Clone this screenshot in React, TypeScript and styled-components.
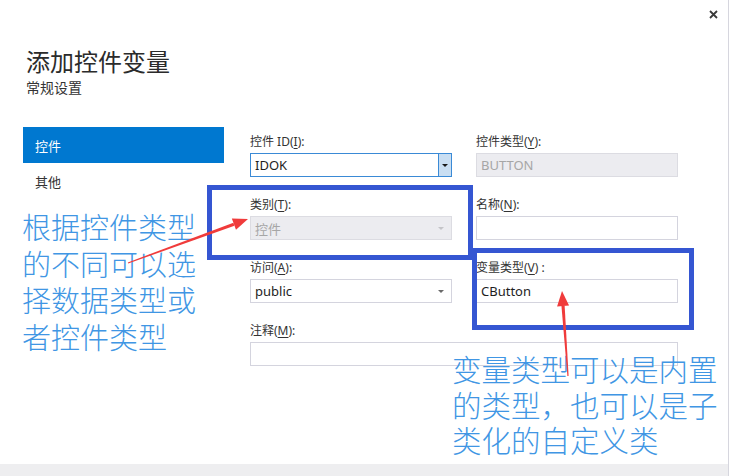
import React from "react";
import styled, { createGlobalStyle } from "styled-components";

const GlobalStyle = createGlobalStyle`
  html, body {
    margin: 0;
    padding: 0;
    background: #ffffff;
  }
  #root {
    width: 732px;
    height: 476px;
    overflow: hidden;
  }
`;

const Window = styled.div`
  position: relative;
  width: 728px;
  height: 476px;
  border-right: 1px solid #d6d6de;
  background: #ffffff;
  display: flex;
  flex-direction: column;
  font-family: "Noto Sans", "Noto Sans CJK SC", sans-serif;
  color: #333333;
`;

const CloseRow = styled.div`
  height: 28px;
  display: flex;
  justify-content: flex-end;
  align-items: center;
  padding-right: 10px;
`;

const CloseButton = styled.div`
  width: 10px;
  height: 10px;
  display: flex;
  align-items: center;
  justify-content: center;
`;

const Title = styled.h1`
  margin: 20px 0 0 26px;
  font-size: 24px;
  line-height: 28px;
  font-weight: 400;
  color: #2b2b2b;
`;

const Subtitle = styled.div`
  margin: 3px 0 0 26px;
  font-size: 14px;
  line-height: 18px;
  color: #333333;
`;

const Body = styled.div`
  flex: 1;
  display: flex;
  margin-top: 30px;
  padding-left: 23px;
`;

const Sidebar = styled.nav`
  width: 201px;
  display: flex;
  flex-direction: column;
`;

const NavItem = styled.div<{ $active?: boolean }>`
  height: 36px;
  display: flex;
  align-items: center;
  padding-left: 12px;
  font-size: 13px;
  background: ${(p) => (p.$active ? "#0078d0" : "transparent")};
  color: ${(p) => (p.$active ? "#ffffff" : "#333333")};
`;

const Form = styled.div`
  margin-left: 26px;
  padding-top: 7px;
  display: grid;
  grid-template-columns: 202px 202px;
  column-gap: 24px;
  row-gap: 20px;
  align-content: start;
`;

const Field = styled.div<{ $wide?: boolean }>`
  display: flex;
  flex-direction: column;
  grid-column: ${(p) => (p.$wide ? "1 / span 2" : "auto")};
`;

const Label = styled.label`
  font-size: 12px;
  line-height: 16px;
  margin-bottom: 3px;
  color: #333333;
  white-space: pre;

  u {
    text-decoration-thickness: 1px;
    text-underline-offset: 2px;
  }
`;

const Box = styled.div<{ $disabled?: boolean; $focus?: boolean }>`
  height: 24px;
  box-sizing: border-box;
  border: 1px solid ${(p) => (p.$focus ? "#3a8ad6" : p.$disabled ? "#dcdce2" : "#d4d4de")};
  background: ${(p) => (p.$disabled ? "#ececf0" : "#ffffff")};
  color: ${(p) => (p.$disabled ? "#a6a6a6" : "#1e1e1e")};
  display: flex;
  align-items: center;
  font-size: 13px;
  padding-left: 4px;
  padding-right: ${(p) => (p.$focus ? "0" : "0")};
`;

const BoxText = styled.span`
  flex: 1;
`;

const DropButton = styled.div<{ $boxed?: boolean }>`
  width: ${(p) => (p.$boxed ? "12px" : "16px")};
  align-self: stretch;
  display: flex;
  align-items: center;
  justify-content: center;
  background: ${(p) => (p.$boxed ? "#c9def2" : "transparent")};
  border-left: ${(p) => (p.$boxed ? "1px solid #3a8ad6" : "none")};
  margin-right: ${(p) => (p.$boxed ? "0" : "2px")};
`;

const Caret = styled.div<{ $color: string }>`
  width: 0;
  height: 0;
  border-left: 3px solid transparent;
  border-right: 3px solid transparent;
  border-top: 3px solid ${(p) => p.$color};
`;

const Footer = styled.div`
  height: 12px;
  background: #eeeef0;
`;

const Overlay = styled.svg`
  position: absolute;
  left: 0;
  top: 0;
  width: 732px;
  height: 476px;
  pointer-events: none;
`;

const Highlight = styled.div<{ $x: number; $y: number; $w: number; $h: number }>`
  position: absolute;
  left: ${(p) => p.$x}px;
  top: ${(p) => p.$y}px;
  width: ${(p) => p.$w}px;
  height: ${(p) => p.$h}px;
  box-sizing: border-box;
  border: 5px solid #3556d2;
  pointer-events: none;
`;

const Note = styled.div<{ $x: number; $y: number; $size: number; $lh: number }>`
  position: absolute;
  left: ${(p) => p.$x}px;
  top: ${(p) => p.$y}px;
  font-family: "Noto Sans CJK SC", sans-serif;
  font-weight: 300;
  font-size: ${(p) => p.$size}px;
  line-height: ${(p) => p.$lh}px;
  color: #4096e4;
  white-space: pre;
  pointer-events: none;
`;

const Combo = ({
  text,
  disabled,
  focus,
}: {
  text: string;
  disabled?: boolean;
  focus?: boolean;
}) => (
  <Box $disabled={disabled} $focus={focus}>
    <BoxText>{text}</BoxText>
    <DropButton $boxed={focus}>
      <Caret $color={focus ? "#1a1a1a" : disabled ? "#c4c4c8" : "#6a6a6a"} />
    </DropButton>
  </Box>
);

const Arrow = ({ x1, y1, x2, y2 }: { x1: number; y1: number; x2: number; y2: number }) => {
  const dx = x2 - x1;
  const dy = y2 - y1;
  const len = Math.hypot(dx, dy);
  const ux = dx / len;
  const uy = dy / len;
  const px = -uy;
  const py = ux;
  const head = 15;
  const half = 6;
  const bx = x2 - ux * head;
  const by = y2 - uy * head;
  const shaft = [
    [x1 + px * 0.6, y1 + py * 0.6],
    [bx + px * 1.6, by + py * 1.6],
    [bx - px * 1.6, by - py * 1.6],
    [x1 - px * 0.6, y1 - py * 0.6],
  ];
  const tip = [
    [x2, y2],
    [bx + px * half, by + py * half],
    [bx - px * half, by - py * half],
  ];
  const pts = (a: number[][]) => a.map((p) => p.join(",")).join(" ");
  return (
    <g fill="#f03b3b">
      <polygon points={pts(shaft)} />
      <polygon points={pts(tip)} />
    </g>
  );
};

const App: React.FC = () => {
  return (
    <>
      <GlobalStyle />
      <Window>
        <CloseRow>
          <CloseButton>
            <svg width="9" height="9" viewBox="0 0 9 9">
              <path d="M1 1 L8 8 M8 1 L1 8" stroke="#3a3a3a" strokeWidth="1.8" />
            </svg>
          </CloseButton>
        </CloseRow>
        <Title>添加控件变量</Title>
        <Subtitle>常规设置</Subtitle>
        <Body>
          <Sidebar>
            <NavItem $active>控件</NavItem>
            <NavItem>其他</NavItem>
          </Sidebar>
          <Form>
            <Field>
              <Label>
                控件 ID(<u>I</u>):
              </Label>
              <Combo text="IDOK" focus />
            </Field>
            <Field>
              <Label>
                控件类型(<u>Y</u>):
              </Label>
              <Box $disabled>BUTTON</Box>
            </Field>
            <Field>
              <Label>
                类别(<u>T</u>):
              </Label>
              <Combo text="控件" disabled />
            </Field>
            <Field>
              <Label>
                名称(<u>N</u>):
              </Label>
              <Box />
            </Field>
            <Field>
              <Label>
                访问(<u>A</u>):
              </Label>
              <Combo text="public" />
            </Field>
            <Field>
              <Label>
                变量类型(<u>V</u>) :
              </Label>
              <Box>CButton</Box>
            </Field>
            <Field $wide>
              <Label>
                注释(<u>M</u>):
              </Label>
              <Box />
            </Field>
          </Form>
        </Body>
        <Footer />

        <Highlight $x={207} $y={185} $w={266} $h={75} />
        <Highlight $x={472} $y={248} $w={222} $h={82} />

        <Note $x={22} $y={208} $size={29} $lh={36.5}>
          {"根据控件类型\n的不同可以选\n择数据类型或\n者控件类型"}
        </Note>
        <Note $x={452} $y={351} $size={29.5} $lh={35.5}>
          {"变量类型可以是内置\n的类型，也可以是子\n类化的自定义类"}
        </Note>

        <Overlay viewBox="0 0 732 476">
          <Arrow x1={128} y1={263} x2={248} y2={219} />
          <Arrow x1={568} y1={376} x2={562} y2={291} />
        </Overlay>
      </Window>
    </>
  );
};

export default App;
